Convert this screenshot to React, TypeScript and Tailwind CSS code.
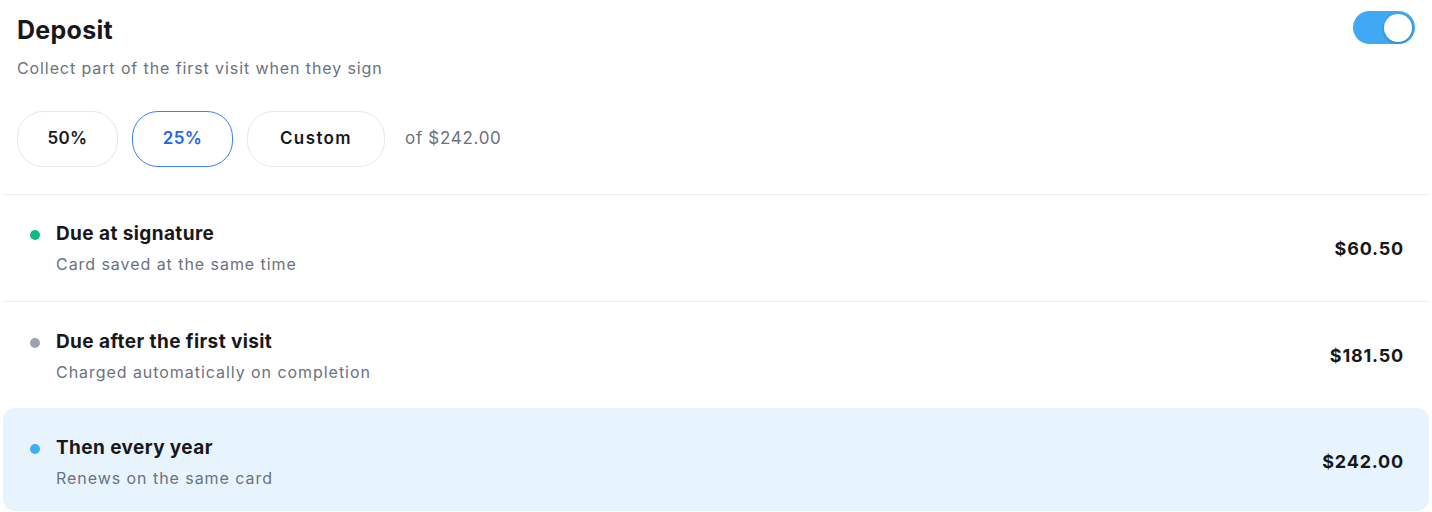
import React, { useState } from 'react';

type Row = {
  title: string;
  note: string;
  amount: string;
  dot: string;
  active?: boolean;
};

const rows: Row[] = [
  { title: 'Due at signature', note: 'Card saved at the same time', amount: '$60.50', dot: 'bg-[#10b981]' },
  { title: 'Due after the first visit', note: 'Charged automatically on completion', amount: '$181.50', dot: 'bg-[#9ca3af]' },
  { title: 'Then every year', note: 'Renews on the same card', amount: '$242.00', dot: 'bg-[#3bb0f5]', active: true },
];

const options = ['50%', '25%', 'Custom'];

export default function App() {
  const [enabled, setEnabled] = useState(true);
  const [choice, setChoice] = useState('25%');

  return (
    <div className="min-h-screen bg-white text-[#18181b] font-['Inter','Noto_Sans',sans-serif]">
      <div className="px-[3px]">
        {/* header */}
        <div className="px-[14px] pt-[15px] pb-[27px] border-b border-[#ededed]">
          <div className="flex items-start justify-between">
            <div>
              <h1 className="text-[25px] leading-[30px] font-bold tracking-[0.3px]">Deposit</h1>
              <p className="mt-[13px] text-[16px] leading-[20px] text-[#6b7280] tracking-[0.9px]">
                Collect part of the first visit when they sign
              </p>
            </div>
            <button
              type="button"
              onClick={() => setEnabled(!enabled)}
              className={`mt-[-4px] w-[62px] h-[33px] rounded-full flex items-center px-[3px] transition ${
                enabled ? 'bg-[#3fa9f5] justify-end' : 'bg-[#d1d5db] justify-start'
              }`}
            >
              <span className="block w-[28px] h-[28px] rounded-full bg-white shadow-[0_1px_3px_rgba(0,0,0,0.3)]" />
            </button>
          </div>

          <div className="mt-[33px] flex items-center gap-[14px]">
            {options.map((o) => (
              <button
                key={o}
                type="button"
                onClick={() => setChoice(o)}
                className={`h-[56px] rounded-[26px] border text-[17px] font-semibold ${
                  o === 'Custom' ? 'w-[138px] tracking-[1.4px]' : 'w-[101px] tracking-[0.3px]'
                } ${choice === o ? 'border-[#3b82f6] text-[#2563eb]' : 'border-[#e5e7eb] text-[#18181b]'}`}
              >
                {o}
              </button>
            ))}
            <span className="ml-[6px] text-[17px] text-[#6b7280] tracking-[0.7px]">of $242.00</span>
          </div>
        </div>

        {/* schedule */}
        {rows.map((r, i) => (
          <div
            key={r.title}
            className={`flex items-center justify-between pl-[27px] pr-[25px] ${
              r.active ? 'bg-[#e8f4fd] rounded-[12px] mt-[-1px] h-[103px] pt-[4px]' : 'h-[107px]'
            } ${i === 0 ? 'border-b border-[#ededed]' : ''}`}
          >
            <div className="flex items-start gap-[16px]">
              <span className={`mt-[8px] w-[10px] h-[10px] rounded-full ${r.dot}`} />
              <div>
                <div className="text-[19px] leading-[24px] font-bold tracking-[0.4px]">{r.title}</div>
                <div className="mt-[8px] text-[16px] leading-[20px] text-[#6b7280] tracking-[0.95px]">{r.note}</div>
              </div>
            </div>
            <div className="text-[18px] font-bold tracking-[0.8px]">{r.amount}</div>
          </div>
        ))}
      </div>
    </div>
  );
}
